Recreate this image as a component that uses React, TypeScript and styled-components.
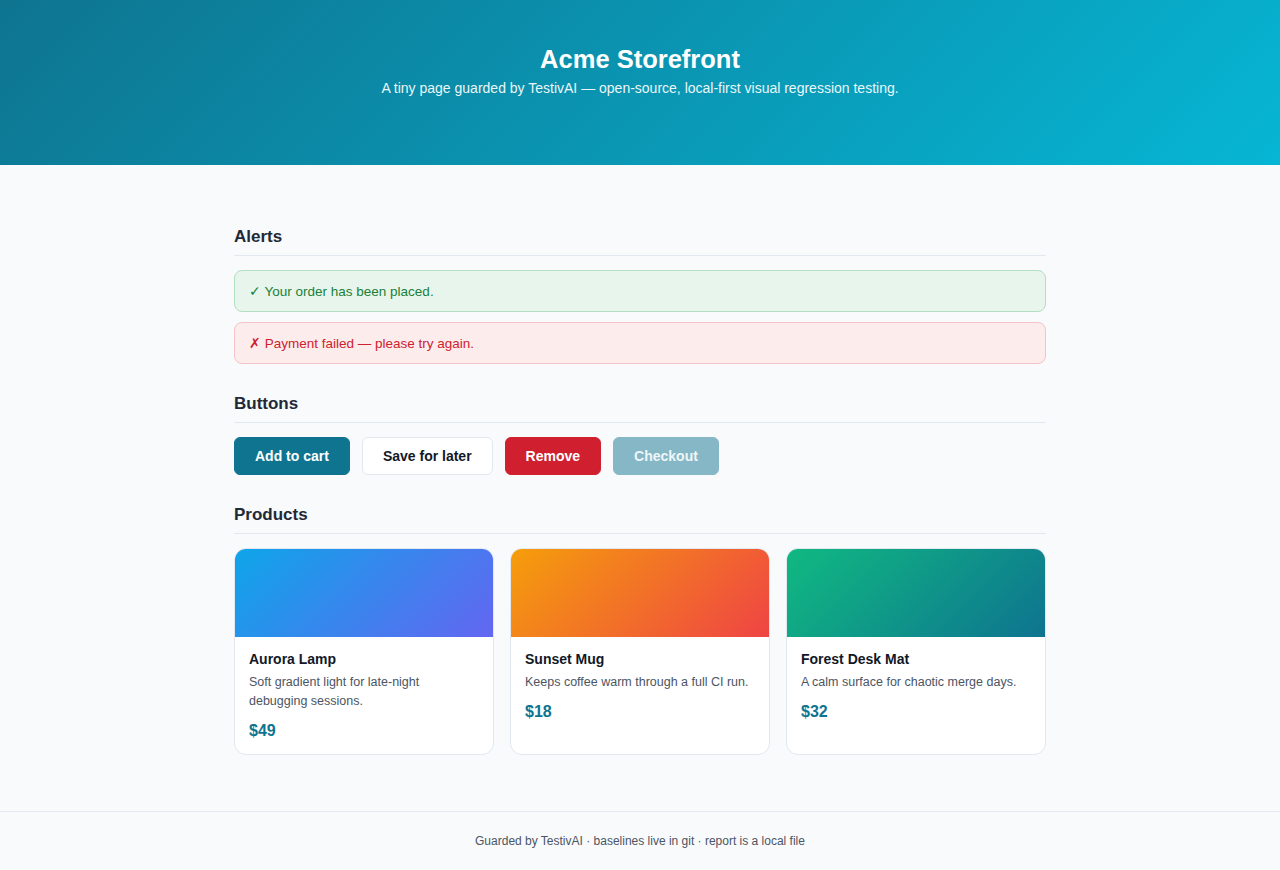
import React from "react";
import styled, { createGlobalStyle } from "styled-components";

const GlobalStyle = createGlobalStyle`
  * { box-sizing: border-box; }
  body {
    margin: 0;
    background: #f8fafc;
    font-family: "Liberation Sans", Arial, sans-serif;
    color: #1f2937;
  }
`;

const Hero = styled.header`
  background: linear-gradient(135deg, #0e7490 0%, #06b6d4 100%);
  color: #ffffff;
  text-align: center;
  padding: 43px 24px 67px;
`;

const HeroTitle = styled.h1`
  margin: 0;
  font-size: 25.5px;
  line-height: 32px;
  font-weight: 700;
`;

const HeroSub = styled.p`
  margin: 3px 0 0;
  font-size: 14px;
  line-height: 20px;
  opacity: 0.92;
`;

const Main = styled.main`
  max-width: 860px;
  margin: 0 auto;
  padding: 60px 24px 56px;
`;

const Section = styled.section`
  & + & {
    margin-top: 28px;
  }
`;

const SectionTitle = styled.h2`
  margin: 0 0 14px;
  padding: 1px 0 7px;
  border-bottom: 1px solid #e2e8f0;
  font-size: 17px;
  line-height: 22px;
  font-weight: 700;
  color: #1f2937;
`;

const AlertList = styled.div`
  display: flex;
  flex-direction: column;
  gap: 10px;
`;

type Tone = "success" | "error";

const tones: Record<Tone, { bg: string; border: string; fg: string }> = {
  success: { bg: "#e8f5ec", border: "#b3dfc0", fg: "#1a7f37" },
  error: { bg: "#fdecec", border: "#f5c2c7", fg: "#cf222e" },
};

const Alert = styled.div<{ $tone: Tone }>`
  padding: 12px 14px;
  border-radius: 8px;
  font-size: 13.5px;
  line-height: 17px;
  height: 42px;
  background: ${(p) => tones[p.$tone].bg};
  border: 1px solid ${(p) => tones[p.$tone].border};
  color: ${(p) => tones[p.$tone].fg};
`;

const ButtonRow = styled.div`
  display: flex;
  gap: 12px;
`;

type Variant = "primary" | "secondary" | "danger" | "disabled";

const variants: Record<Variant, string> = {
  primary: "background: #0e7490; color: #ffffff; border-color: #0e7490;",
  secondary: "background: #ffffff; color: #111827; border-color: #e2e8f0;",
  danger: "background: #d0202f; color: #ffffff; border-color: #d0202f;",
  disabled: "background: #86b7c6; color: #eef6f8; border-color: #86b7c6; cursor: not-allowed;",
};

const Button = styled.button<{ $variant: Variant }>`
  font-family: inherit;
  font-size: 14px;
  font-weight: 700;
  line-height: 18px;
  padding: 9px 20px;
  border: 1px solid transparent;
  border-radius: 6px;
  cursor: pointer;
  ${(p) => variants[p.$variant]}
`;

const CardGrid = styled.div`
  display: grid;
  grid-template-columns: repeat(3, 1fr);
  gap: 16px;
`;

const Card = styled.article`
  background: #ffffff;
  border: 1px solid #e2e8f0;
  border-radius: 12px;
  overflow: hidden;
`;

const CardArt = styled.div<{ $from: string; $to: string }>`
  height: 88px;
  background: linear-gradient(135deg, ${(p) => p.$from}, ${(p) => p.$to});
`;

const CardBody = styled.div`
  padding: 14px 14px 12px;
`;

const CardTitle = styled.h3`
  margin: 0;
  font-size: 14px;
  line-height: 17px;
  font-weight: 700;
  color: #111827;
`;

const CardDesc = styled.p`
  margin: 5px 0 0;
  font-size: 12.5px;
  line-height: 19px;
  color: #4b5563;
`;

const Price = styled.div`
  margin-top: 9px;
  font-size: 16px;
  line-height: 22px;
  font-weight: 700;
  color: #0e7490;
`;

const Footer = styled.footer`
  border-top: 1px solid #e2e8f0;
  padding: 20px 24px;
  text-align: center;
  font-size: 12px;
  line-height: 18px;
  color: #4b5563;
`;

const products = [
  { name: "Aurora Lamp", desc: "Soft gradient light for late-night debugging sessions.", price: "$49", from: "#0ea5e9", to: "#6366f1" },
  { name: "Sunset Mug", desc: "Keeps coffee warm through a full CI run.", price: "$18", from: "#f59e0b", to: "#ef4444" },
  { name: "Forest Desk Mat", desc: "A calm surface for chaotic merge days.", price: "$32", from: "#10b981", to: "#0e7490" },
];

export default function App() {
  return (
    <>
      <GlobalStyle />
      <Hero>
        <HeroTitle>Acme Storefront</HeroTitle>
        <HeroSub>A tiny page guarded by TestivAI — open-source, local-first visual regression testing.</HeroSub>
      </Hero>
      <Main>
        <Section>
          <SectionTitle>Alerts</SectionTitle>
          <AlertList>
            <Alert $tone="success">✓ Your order has been placed.</Alert>
            <Alert $tone="error">✗ Payment failed — please try again.</Alert>
          </AlertList>
        </Section>
        <Section>
          <SectionTitle>Buttons</SectionTitle>
          <ButtonRow>
            <Button $variant="primary">Add to cart</Button>
            <Button $variant="secondary">Save for later</Button>
            <Button $variant="danger">Remove</Button>
            <Button $variant="disabled" disabled>Checkout</Button>
          </ButtonRow>
        </Section>
        <Section>
          <SectionTitle>Products</SectionTitle>
          <CardGrid>
            {products.map((p) => (
              <Card key={p.name}>
                <CardArt $from={p.from} $to={p.to} />
                <CardBody>
                  <CardTitle>{p.name}</CardTitle>
                  <CardDesc>{p.desc}</CardDesc>
                  <Price>{p.price}</Price>
                </CardBody>
              </Card>
            ))}
          </CardGrid>
        </Section>
      </Main>
      <Footer>Guarded by TestivAI · baselines live in git · report is a local file</Footer>
    </>
  );
}
